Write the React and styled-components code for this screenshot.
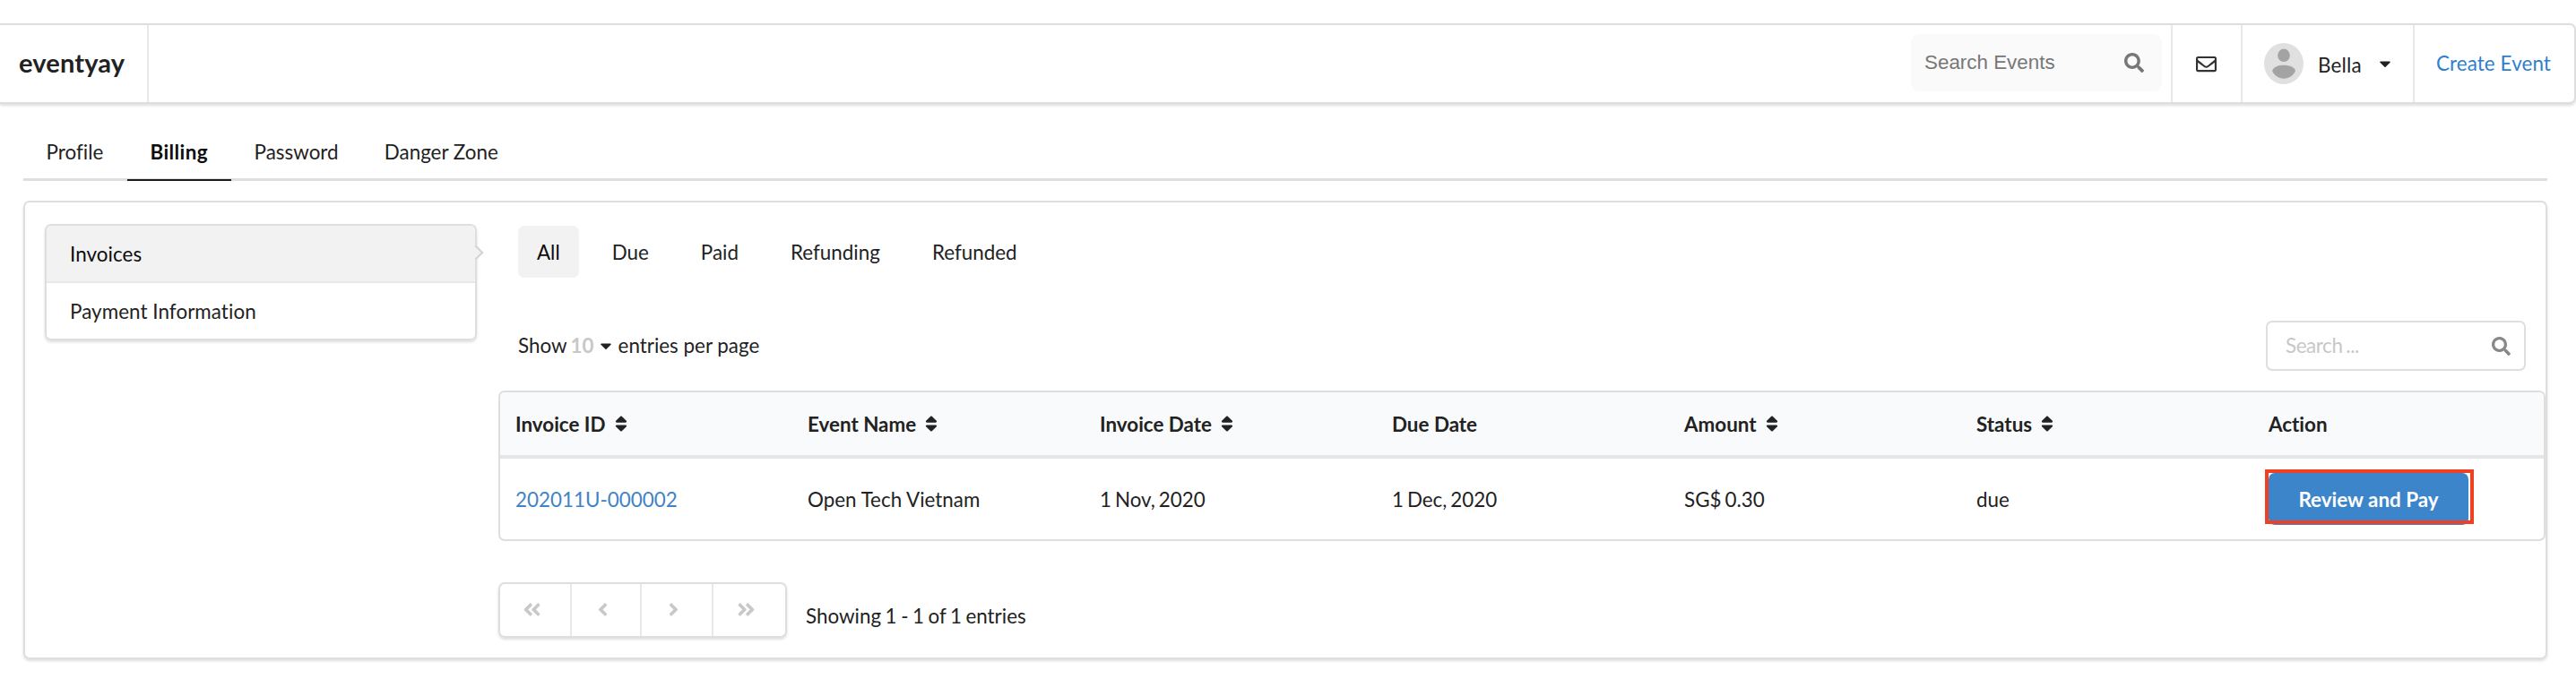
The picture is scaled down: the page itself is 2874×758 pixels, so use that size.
import React from "react";
import styled, { createGlobalStyle } from "styled-components";
import { FaSearch, FaRegEnvelope, FaCaretDown, FaSort, FaAngleLeft, FaAngleRight, FaAngleDoubleLeft, FaAngleDoubleRight } from "react-icons/fa";

const Global = createGlobalStyle`
  *, *::before, *::after { box-sizing: border-box; }
  body { margin: 0; background: #fff; color: #222; font: 22.4px/32px Lato, sans-serif; font-variant-ligatures: none; }
  a { color: #4183c4; text-decoration: none; }
`;

const line = "#dedede";
const softLine = "#e8e8e8";
const shadow = "0 2px 3px rgba(34, 36, 38, 0.15)";

const Page = styled.div`
  height: 758px;
  padding-top: 26px;
  overflow: hidden;
`;

const NavBar = styled.header`
  display: flex;
  height: 90px;
  border: 2px solid ${line};
  border-left: 0;
  border-radius: 0 7px 7px 0;
  box-shadow: ${shadow};
`;

const NavItem = styled.div`
  display: flex;
  align-items: center;
  width: ${(p) => p.$w}px;
  padding: 0 0 0 ${(p) => p.$pad}px;
  border-left: ${(p) => (p.$first ? "0" : `2px solid ${softLine}`)};
  white-space: nowrap;
`;

const Brand = styled(NavItem)`
  border-right: 2px solid ${softLine};
  font-size: 29px;
  font-weight: 700;
  letter-spacing: 0.15px;
  padding-bottom: 3px;
`;

const EventSearch = styled.div`
  display: flex;
  align-items: center;
  justify-content: space-between;
  width: 280px;
  height: 64px;
  margin: 10px 10px 0 auto;
  padding: 0 20px 0 15px;
  border-radius: 9px;
  background: #fafafa;
  color: #777;
  font-family: "Liberation Sans", sans-serif;
`;

const Avatar = styled.svg`
  width: 44px;
  height: 46px;
  margin-right: 16px;
`;

const UserName = styled.span`
  width: 65px;
  padding-top: 3px;
  letter-spacing: 0.2px;
`;

const CreateLink = styled.a`
  padding-bottom: 1px;
  color: #2f80cc;
  letter-spacing: 0.1px;
`;

const Tabs = styled.nav`
  display: flex;
  height: 62px;
  margin: 24px 32px 22px 26px;
  border-bottom: 3px solid ${line};
`;

const Tab = styled.a`
  height: 62px;
  min-width: 116px;
  padding: 14px 25.6px 0;
  border-bottom: 2px solid ${(p) => (p.$active ? "#1b1c1d" : "transparent")};
  color: ${(p) => (p.$active ? "#0d0d0d" : "#222")};
  font-weight: ${(p) => (p.$active ? 700 : 400)};
  letter-spacing: ${(p) => (p.$active ? "0.4px" : "0")};
`;

const Panel = styled.main`
  display: flex;
  height: 512px;
  margin: 0 32px 0 26px;
  padding: 24px 0 0 22px;
  border: 2px solid ${line};
  border-radius: 7px;
  box-shadow: ${shadow};
`;

const SideMenu = styled.aside`
  width: 482px;
  height: 130px;
  border: 2px solid ${line};
  border-radius: 7px;
  box-shadow: ${shadow};
`;

const SideItem = styled.a`
  position: relative;
  display: flex;
  align-items: center;
  height: ${(p) => (p.$active ? 64 : 62)}px;
  padding: 2px 26px 0;
  letter-spacing: 0.06px;
  color: ${(p) => (p.$active ? "#0d0d0d" : "#222")};
  background: ${(p) => (p.$active ? "#f2f2f2" : "#fff")};
  border-bottom: ${(p) => (p.$active ? `2px solid ${softLine}` : "0")};
  border-radius: ${(p) => (p.$active ? "5px 5px 0 0" : "0 0 5px 5px")};
`;

const Pointer = styled.span`
  position: absolute;
  top: 24px;
  right: -7px;
  width: 12px;
  height: 12px;
  transform: rotate(45deg);
  background: #f2f2f2;
  border: solid #d4d4d5;
  border-width: 2px 2px 0 0;
`;

const Content = styled.section`
  flex: 1;
  margin-left: 24px;
`;

const Filters = styled.div`
  display: flex;
  gap: 16px;
  padding: 2px 0 0 22px;
`;

const Filter = styled.a`
  height: 58px;
  padding: 14px 21px;
  border-radius: 7px;
  line-height: 32px;
  color: ${(p) => (p.$active ? "#0d0d0d" : "#222")};
  background: ${(p) => (p.$active ? "#f2f2f2" : "transparent")};
`;

const Toolbar = styled.div`
  display: flex;
  justify-content: space-between;
  align-items: center;
  height: 56px;
  margin: 48px 22px 22px 22px;
`;

const PageSize = styled.div`
  display: flex;
  align-items: center;
`;

const Size = styled.b`
  margin: 0 3px 0 4px;
  color: #c8c8c8;
`;

const Entries = styled.span`
  margin-left: 4px;
`;

const TableSearch = styled.div`
  display: flex;
  align-items: center;
  justify-content: space-between;
  width: 290px;
  height: 56px;
  padding: 0 15px 0 20px;
  border: 2px solid ${line};
  border-radius: 7px;
  color: #c7c7c7;
  letter-spacing: -0.4px;
  word-spacing: -1.5px;
`;

const Table = styled.div`
  width: 2284px;
  height: 168px;
  border: 2px solid ${line};
  border-radius: 7px;
  overflow: hidden;
`;

const Row = styled.div`
  display: grid;
  grid-template-columns: repeat(6, 326px) 1fr;
  align-items: center;
  height: 90px;
`;

const HeadRow = styled(Row)`
  height: 74px;
  background: #f9fafb;
  border-bottom: 4px solid #e5e7e7;
  font-weight: 700;
`;

const Cell = styled.div`
  display: flex;
  align-items: center;
  padding-left: 17px;
  word-spacing: ${(p) => (p.$tight ? "-1.8px" : "0")};
`;

const CellText = styled.span`
  padding-top: 2px;
`;

const SortIcon = styled(FaSort)`
  width: 14px;
  height: 22px;
  margin-left: 10px;
`;

const Highlight = styled.div`
  width: 233px;
  height: 61px;
  margin: -5px 0 0 -4px;
  border: 4px solid #ee4023;
`;

const PayButton = styled.button`
  position: relative;
  z-index: -1;
  display: block;
  width: 223px;
  height: 58px;
  padding: 0;
  border: 0;
  border-radius: 7px;
  background: #3d85cb;
  color: #fff;
  font: 700 22.4px Lato, sans-serif;
`;

const Footer = styled.footer`
  display: flex;
  margin-top: 46px;
`;

const Pager = styled.div`
  display: flex;
  width: 322px;
  height: 62px;
  margin-right: 21px;
  border: 2px solid ${line};
  border-radius: 7px;
  box-shadow: ${shadow};
`;

const PageButton = styled.span`
  display: flex;
  width: ${(p) => p.$w}px;
  align-items: center;
  justify-content: center;
  padding: 0 7px 1px 0;
  color: #c8c8c8;
  border-left: ${(p) => (p.$first ? "0" : `2px solid ${softLine}`)};
`;

const Summary = styled.span`
  padding-top: 22px;
  word-spacing: -1.2px;
`;

const columns = [
  ["Invoice ID", true],
  ["Event Name", true],
  ["Invoice Date", true],
  ["Due Date", false],
  ["Amount", true],
  ["Status", true],
  ["Action", false],
];

const pagerButtons = [
  [FaAngleDoubleLeft, 78],
  [FaAngleLeft, 78],
  [FaAngleRight, 80],
  [FaAngleDoubleRight, 82],
];

export default function App() {
  return (
    <Page>
      <Global />
      <NavBar>
        <Brand $first $w={166} $pad={21}>eventyay</Brand>
        <EventSearch>
          Search Events
          <FaSearch size={22} />
        </EventSearch>
        <NavItem $w={78} $pad={26}><FaRegEnvelope size={23} color="#333" /></NavItem>
        <NavItem $w={192} $pad={24}>
          <Avatar viewBox="0 0 44 46">
            <ellipse cx="22" cy="23" rx="22" ry="23" fill="#e0e0e0" />
            <ellipse cx="22" cy="13.8" rx="6.8" ry="7.2" fill="#a3a3a3" />
            <path d="M9 31C10.500 27 15 24.800 22 24.800S33.500 27 35 31C33 36 28 39.700 22 39.700S11 36 9 31Z" fill="#a3a3a3" />
          </Avatar>
          <UserName>Bella</UserName>
          <FaCaretDown size={20} />
        </NavItem>
        <NavItem $w={180} $pad={24}><CreateLink>Create Event</CreateLink></NavItem>
      </NavBar>
      <Tabs>
        <Tab>Profile</Tab>
        <Tab $active>Billing</Tab>
        <Tab>Password</Tab>
        <Tab>Danger Zone</Tab>
      </Tabs>
      <Panel>
        <SideMenu>
          <SideItem $active>Invoices<Pointer /></SideItem>
          <SideItem>Payment Information</SideItem>
        </SideMenu>
        <Content>
          <Filters>
            <Filter $active>All</Filter>
            <Filter>Due</Filter>
            <Filter>Paid</Filter>
            <Filter>Refunding</Filter>
            <Filter>Refunded</Filter>
          </Filters>
          <Toolbar>
            <PageSize>
              Show <Size>10</Size> <FaCaretDown size={20} /> <Entries>entries per page</Entries>
            </PageSize>
            <TableSearch>
              Search ...
              <FaSearch size={21} color="#888" />
            </TableSearch>
          </Toolbar>
          <Table>
            <HeadRow>
              {columns.map(([label, sortable]) => (
                <Cell key={label}><CellText>{label}</CellText>{sortable && <SortIcon />}</Cell>
              ))}
            </HeadRow>
            <Row>
              <Cell><CellText as="a">202011U-000002</CellText></Cell>
              <Cell><CellText>Open Tech Vietnam</CellText></Cell>
              <Cell $tight><CellText>1 Nov, 2020</CellText></Cell>
              <Cell $tight><CellText>1 Dec, 2020</CellText></Cell>
              <Cell $tight><CellText>SG$ 0.30</CellText></Cell>
              <Cell><CellText>due</CellText></Cell>
              <Cell><Highlight><PayButton>Review and Pay</PayButton></Highlight></Cell>
            </Row>
          </Table>
          <Footer>
            <Pager>
              {pagerButtons.map(([Icon, width], i) => (
                <PageButton key={i} $w={width} $first={i === 0}><Icon size={23} /></PageButton>
              ))}
            </Pager>
            <Summary>Showing 1 - 1 of 1 entries</Summary>
          </Footer>
        </Content>
      </Panel>
    </Page>
  );
}
